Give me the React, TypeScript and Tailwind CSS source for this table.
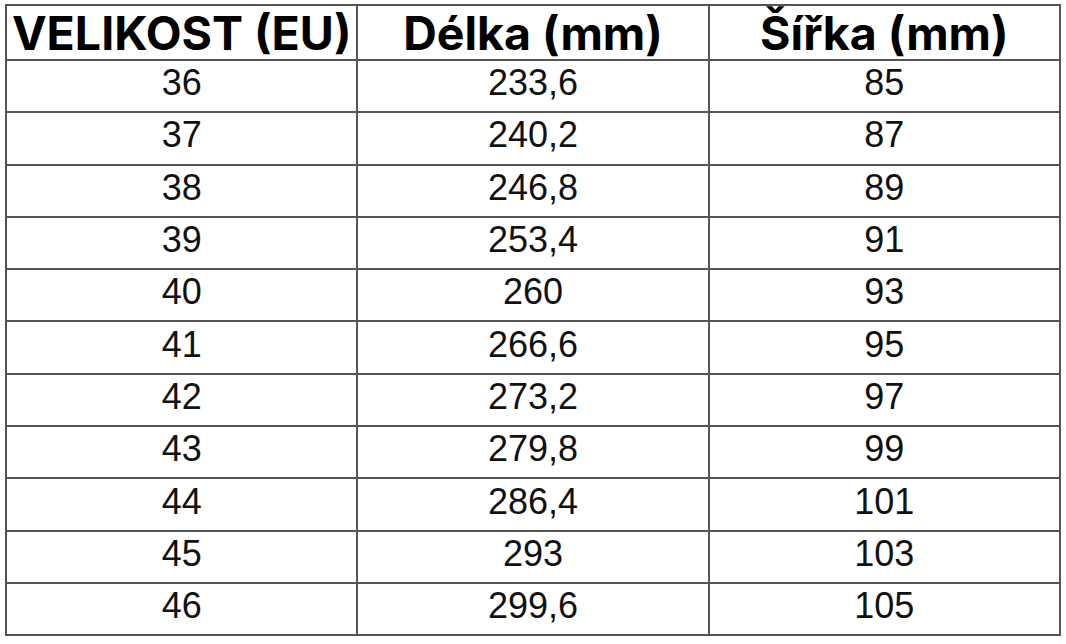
const rows: [string, string, string][] = [
  ["36", "233,6", "85"],
  ["37", "240,2", "87"],
  ["38", "246,8", "89"],
  ["39", "253,4", "91"],
  ["40", "260", "93"],
  ["41", "266,6", "95"],
  ["42", "273,2", "97"],
  ["43", "279,8", "99"],
  ["44", "286,4", "101"],
  ["45", "293", "103"],
  ["46", "299,6", "105"],
];

const headers = ["VELIKOST (EU)", "Délka (mm)", "Šířka (mm)"];

export default function App() {
  return (
    <div className="h-[644px] w-[1066px] bg-white pl-[5px] pt-[4px]">
      <table className="w-[1056px] table-fixed border-collapse">
        <thead>
          <tr className="h-[55px]">
            {headers.map((h) => (
              <th
                key={h}
                className="border-2 border-[#555] p-0 pt-[2px] text-center font-['Inter',sans-serif] text-[46.5px] font-bold leading-none text-black"
              >
                {h}
              </th>
            ))}
          </tr>
        </thead>
        <tbody>
          {rows.map((r) => (
            <tr key={r[0]} className="h-[52.3px]">
              {r.map((cell, i) => (
                <td
                  key={i}
                  className="border-2 border-[#555] p-0 pb-[6px] text-center font-['Liberation_Sans',Arial,sans-serif] text-[36px] leading-none text-[#111]"
                >
                  {cell}
                </td>
              ))}
            </tr>
          ))}
        </tbody>
      </table>
    </div>
  );
}
